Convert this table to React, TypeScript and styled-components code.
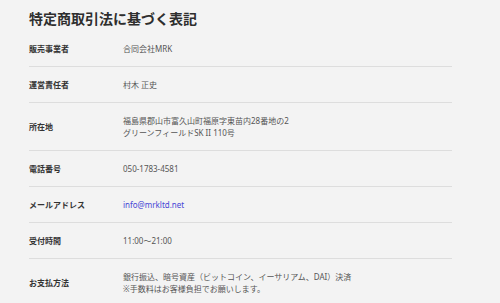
import styled, { createGlobalStyle } from "styled-components";

const GlobalStyle = createGlobalStyle`
  html, body {
    margin: 0;
    padding: 0;
    background: #f3f3f3;
  }
  body {
    font-family: "Noto Sans", "Noto Sans CJK JP", sans-serif;
  }
`;

const rows = [
  { label: "販売事業者", value: ["合同会社MRK"] },
  { label: "運営責任者", value: ["村木 正史"] },
  {
    label: "所在地",
    value: ["福島県郡山市富久山町福原字東苗内28番地の2", "グリーンフィールドSK II 110号"],
  },
  { label: "電話番号", value: ["050-1783-4581"] },
  { label: "メールアドレス", value: ["info@mrkltd.net"], link: true },
  { label: "受付時間", value: ["11:00〜21:00"] },
  {
    label: "お支払方法",
    value: [
      "銀行振込、暗号資産（ビットコイン、イーサリアム、DAI）決済",
      "※手数料はお客様負担でお願いします。",
    ],
  },
];

export default function App() {
  return (
    <>
      <GlobalStyle />
      <Page>
        <Title>特定商取引法に基づく表記</Title>
        <Table>
          {rows.map((row) => (
            <Row key={row.label}>
              <Label>{row.label}</Label>
              <Value>
                {row.value.map((line) =>
                  row.link ? (
                    <Link key={line} href={`mailto:${line}`}>
                      {line}
                    </Link>
                  ) : (
                    <div key={line}>{line}</div>
                  )
                )}
              </Value>
            </Row>
          ))}
        </Table>
      </Page>
    </>
  );
}

const Page = styled.div`
  width: 423px;
  padding: 8px 0 0 29px;
`;

const Title = styled.h1`
  margin: 0 0 3px;
  font-family: "Noto Sans CJK JP", sans-serif;
  font-size: 14px;
  line-height: 20px;
  font-weight: 700;
  color: #2e2e2e;
`;

const Table = styled.div`
  display: flex;
  flex-direction: column;
`;

const Row = styled.div`
  display: grid;
  grid-template-columns: 94px 1fr;
  align-items: center;
  padding: 12px 0 11px;
  border-bottom: 1px solid #dddddd;
  font-size: 8px;
  line-height: 12px;
`;

const Label = styled.div`
  font-weight: 700;
  color: #333333;
`;

const Value = styled.div`
  color: #555555;
`;

const Link = styled.a`
  color: #4646d6;
  text-decoration: none;
`;
